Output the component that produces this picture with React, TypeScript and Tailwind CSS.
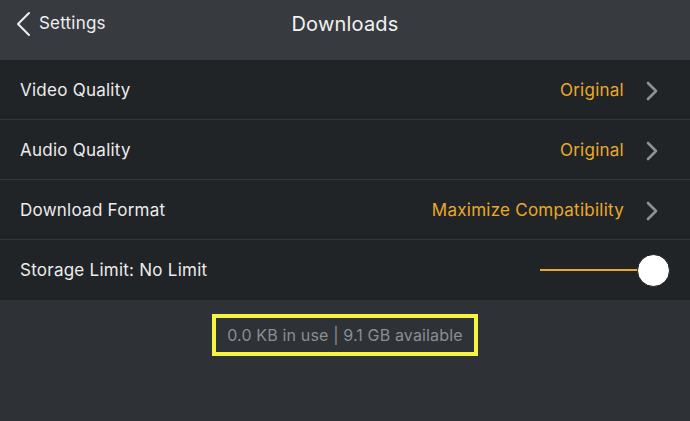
import React from 'react';

const Chevron = () => (
  <svg width="12" height="20" viewBox="0 0 12 20" className="ml-[22px]">
    <path d="M2 2 L10 10 L2 18" fill="none" stroke="#8e9194" strokeWidth="2.6" strokeLinecap="round" strokeLinejoin="round" />
  </svg>
);

const Row = ({ label, value }: { label: string; value: string }) => (
  <div className="h-[60px] flex items-center pl-5 pr-[32px] pt-[2px] border-b border-[#33373a]">
    <span className="text-[17px] tracking-[0.25px] text-[#ececec]">{label}</span>
    <span className="ml-auto text-[17px] tracking-[0.25px] text-[#e9a92c]">{value}</span>
    <Chevron />
  </div>
);

export default function App() {
  return (
    <div className="w-[690px] h-[421px] bg-[#2e3236] overflow-hidden" style={{ fontFamily: 'Inter, "Noto Sans", sans-serif' }}>
      <div className="h-[60px] bg-[#373b3f] relative flex items-start justify-center pt-[9px]">
        <div className="absolute left-[16px] top-[11px] flex items-center">
          <svg width="16" height="26" viewBox="0 0 16 26">
            <path d="M13 2 L2 13 L13 24" fill="none" stroke="#eceff0" strokeWidth="2" strokeLinecap="round" strokeLinejoin="round" />
          </svg>
          <span className="ml-[7px] text-[17px] tracking-[0.2px] text-[#eceff0] -mt-[1px]">Settings</span>
        </div>
        <span className="text-[20px] tracking-[0.2px] text-[#f2f2f2]">Downloads</span>
      </div>
      <div className="bg-[#212427]">
        <Row label="Video Quality" value="Original" />
        <Row label="Audio Quality" value="Original" />
        <Row label="Download Format" value="Maximize Compatibility" />
        <div className="h-[60px] flex items-center pl-5 pr-[20px]">
          <span className="text-[17px] tracking-[0.25px] text-[#ececec] pt-[2px]">Storage Limit: No Limit</span>
          <div className="ml-auto flex items-center">
            <div className="w-[100px] h-[2px] bg-[#e9a92c]" />
            <div className="w-[33px] h-[33px] rounded-full bg-white border border-[#1a1c1e] -ml-[3px]" />
          </div>
        </div>
      </div>
      <div className="flex justify-center pt-[14px]">
        <div className="w-[266px] h-[42px] border-[4px] border-[#f6f442] flex items-center justify-center">
          <span className="text-[16px] tracking-[0.15px] text-[#8a8e92]">0.0 KB in use | 9.1 GB available</span>
        </div>
      </div>
    </div>
  );
}
